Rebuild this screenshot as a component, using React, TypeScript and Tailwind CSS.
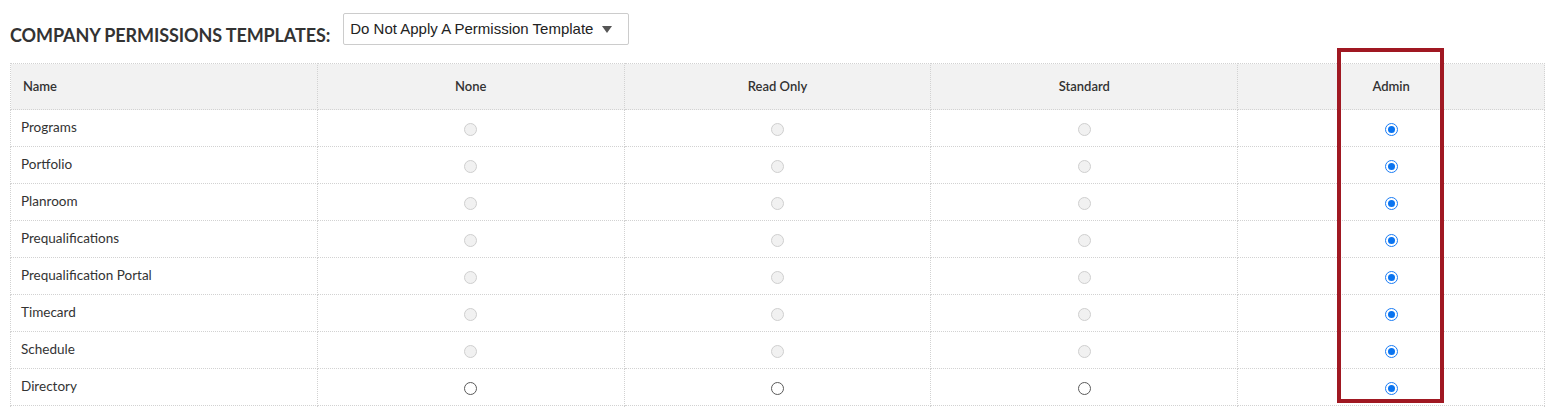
import React from 'react';

// Permission levels shown as columns
const levels = ['None', 'Read Only', 'Standard', 'Admin'];

// Tools listed as rows; the last one is cut off by the window
const tools = [
  { name: 'Programs', disabled: true },
  { name: 'Portfolio', disabled: true },
  { name: 'Planroom', disabled: true },
  { name: 'Prequalifications', disabled: true },
  { name: 'Prequalification Portal', disabled: true },
  { name: 'Timecard', disabled: true },
  { name: 'Schedule', disabled: true },
  { name: 'Directory', disabled: false },
];

const Radio: React.FC<{ checked: boolean; disabled: boolean }> = ({ checked, disabled }) => {
  if (checked) {
    return (
      <span className="inline-flex h-[13px] w-[13px] items-center justify-center rounded-full border-[1.5px] border-[#1a7cf5] bg-white align-middle">
        <span className="h-[7px] w-[7px] rounded-full bg-[#0a74f0]" />
      </span>
    );
  }
  return (
    <span
      className={
        disabled
          ? 'inline-block h-[13px] w-[13px] rounded-full border border-[#cfcfcf] bg-[#f1f1f1] align-middle'
          : 'inline-block h-[13px] w-[13px] rounded-full border border-[#5a5a5a] bg-white align-middle'
      }
    />
  );
};

export default function App() {
  return (
    <div className="relative h-[408px] w-[1545px] overflow-hidden bg-white font-['Lato','Noto_Sans',sans-serif] text-[#333]">
      <div className="flex items-end gap-[13px] pl-[10px] pt-[13px]">
        <h1 className="pb-[1px] text-[18px] font-bold leading-none tracking-[-0.1px] text-[#333] uppercase">
          Company Permissions Templates:
        </h1>
        <div className="flex h-[32px] w-[286px] items-center justify-between rounded-[2px] border border-[#cccccc] bg-white pl-[6px] pr-[16px] font-['Liberation_Sans',Arial,sans-serif] text-[15px] text-[#222]">
          <span>Do Not Apply A Permission Template</span>
          <svg width="10" height="7" viewBox="0 0 10 7">
            <path d="M0 0 L10 0 L5 7 Z" fill="#555" />
          </svg>
        </div>
      </div>

      <table className="mt-[18px] ml-[10px] w-[1535px] table-fixed border-collapse">
        <thead>
          <tr className="h-[46px] bg-[#f2f2f2]">
            <th className="border border-dotted border-[#d2d2d2] pl-[12px] text-left text-[13px] font-semibold">Name</th>
            {levels.map((l) => (
              <th key={l} className="border border-dotted border-[#d2d2d2] text-center text-[13px] font-semibold">
                {l}
              </th>
            ))}
          </tr>
        </thead>
        <tbody>
          {tools.map((t) => (
            <tr key={t.name} className="h-[37px]">
              <td className="border border-dotted border-[#d2d2d2] pl-[10px] pb-[1px] text-[13.5px]">{t.name}</td>
              {levels.map((l) => (
                <td key={l} className="border border-dotted border-[#d2d2d2] text-center">
                  <Radio checked={l === 'Admin'} disabled={t.disabled} />
                </td>
              ))}
            </tr>
          ))}
          {/* next row, cut off by the window edge */}
          <tr className="h-[37px]">
            <td className="border border-dotted border-[#d2d2d2]" />
            {levels.map((l) => (
              <td key={l} className="border border-dotted border-[#d2d2d2]" />
            ))}
          </tr>
        </tbody>
      </table>

      {/* highlight drawn over the Admin column */}
      <div className="pointer-events-none absolute left-[1337px] top-[48px] h-[355px] w-[107px] border-[4px] border-[#a01822]" />
    </div>
  );
}
